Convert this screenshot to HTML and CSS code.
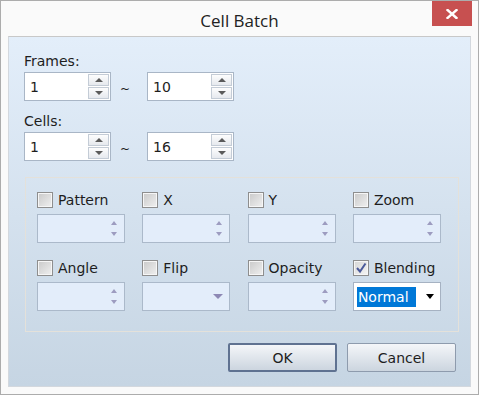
FILE: index.html
```html
<!DOCTYPE html>
<html lang="en">
<head>
  <meta charset="UTF-8">
  <title>Cell Batch</title>
  <link rel="stylesheet" href="styles.css">
</head>
<body>
  <div class="window">
    <div class="titlebar">
      <div class="title">Cell Batch</div>
      <button class="close" title="Close">
        <svg width="12" height="10" viewBox="0 0 12 10"><path d="M1.5 1 L10.5 9 M10.5 1 L1.5 9" stroke="#fff" stroke-width="2.4" stroke-linecap="square"/></svg>
      </button>
    </div>
    <div class="content">
      <div class="field-label">Frames:</div>
      <div class="range">
        <div class="spin"><span class="value">1</span><div class="spin-btns"><span class="sbtn"><i class="up"></i></span><span class="sbtn"><i class="down"></i></span></div></div>
        <span class="tilde">~</span>
        <div class="spin"><span class="value">10</span><div class="spin-btns"><span class="sbtn"><i class="up"></i></span><span class="sbtn"><i class="down"></i></span></div></div>
      </div>
      <div class="field-label second">Cells:</div>
      <div class="range">
        <div class="spin"><span class="value">1</span><div class="spin-btns"><span class="sbtn"><i class="up"></i></span><span class="sbtn"><i class="down"></i></span></div></div>
        <span class="tilde">~</span>
        <div class="spin"><span class="value">16</span><div class="spin-btns"><span class="sbtn"><i class="up"></i></span><span class="sbtn"><i class="down"></i></span></div></div>
      </div>

      <div class="group">
        <div class="cell">
          <label class="check"><span class="box"></span>Pattern</label>
          <div class="spin off"><div class="arrows"><i class="up"></i><i class="down"></i></div></div>
        </div>
        <div class="cell">
          <label class="check"><span class="box"></span>X</label>
          <div class="spin off"><div class="arrows"><i class="up"></i><i class="down"></i></div></div>
        </div>
        <div class="cell">
          <label class="check"><span class="box"></span>Y</label>
          <div class="spin off"><div class="arrows"><i class="up"></i><i class="down"></i></div></div>
        </div>
        <div class="cell">
          <label class="check"><span class="box"></span>Zoom</label>
          <div class="spin off"><div class="arrows"><i class="up"></i><i class="down"></i></div></div>
        </div>
        <div class="cell">
          <label class="check"><span class="box"></span>Angle</label>
          <div class="spin off"><div class="arrows"><i class="up"></i><i class="down"></i></div></div>
        </div>
        <div class="cell">
          <label class="check"><span class="box"></span>Flip</label>
          <div class="spin off combo"><i class="drop"></i></div>
        </div>
        <div class="cell">
          <label class="check"><span class="box"></span>Opacity</label>
          <div class="spin off"><div class="arrows"><i class="up"></i><i class="down"></i></div></div>
        </div>
        <div class="cell">
          <label class="check"><span class="box checked"><svg width="12" height="12" viewBox="0 0 12 12"><path d="M2 6 L5 9.5 L10.5 1.5" fill="none" stroke="#4b5a9a" stroke-width="2"/></svg></span>Blending</label>
          <div class="spin select"><span class="selected">Normal</span><i class="drop dark"></i></div>
        </div>
      </div>

      <div class="buttons">
        <button class="btn default">OK</button>
        <button class="btn">Cancel</button>
      </div>
    </div>
  </div>
</body>
</html>
```

FILE: styles.css
```css
body { margin: 0; font-family: "DejaVu Sans", Verdana, sans-serif; font-size: 14px; color: #1e1e1e; }
.window { width: 479px; height: 395px; box-sizing: border-box; border: 1px solid #acacac; background: #fafafa; display: flex; flex-direction: column; }

.titlebar { height: 35px; display: grid; grid-template-columns: 1fr auto 1fr; align-items: start; }
.title { grid-column: 2; font-family: "Open Sans", sans-serif; font-size: 17px; line-height: 24px; padding-top: 8px; color: #222; }
.close { grid-column: 3; justify-self: end; width: 40px; height: 25px; margin-right: 6px; padding: 0; border: none; background: #c75050; display: flex; align-items: center; justify-content: center; }

.content { flex: 1; margin: 0 7px 7px; border: 1px solid #d3d8de; border-top-color: #c8c8c8; background: linear-gradient(#e3eefa, #c6d5e3); padding: 16px 15px 0; }
.field-label { line-height: 16px; margin-bottom: 3px; }
.field-label.second { margin-top: 12px; }
.range { display: flex; align-items: center; }
.tilde { width: 36px; text-align: center; padding: 5px 8px 0 0; box-sizing: border-box; font-size: 12px; }

.spin { width: 87px; height: 29px; box-sizing: border-box; border: 1px solid #a9b6c6; background: #fff; display: flex; align-items: center; }
.value { padding-left: 5px; flex: 1; }
.spin-btns { display: flex; flex-direction: column; gap: 1px; align-self: stretch; padding: 1px 1px 1px 0; }
.sbtn { width: 19px; flex: 1; border: 1px solid #c4ccd6; background: linear-gradient(#fdfdfd, #e6e9ee); display: flex; align-items: center; justify-content: center; }
.up { width: 0; height: 0; border-left: 4px solid transparent; border-right: 4px solid transparent; border-bottom: 4px solid #5b5b5b; }
.down { width: 0; height: 0; border-left: 4px solid transparent; border-right: 4px solid transparent; border-top: 4px solid #5b5b5b; }

.group { width: 434px; box-sizing: border-box; margin: 16px 0 0 1px; border: 1px solid #e4e1da; padding: 14px 0 20px 11px; display: grid; grid-template-columns: repeat(4, 88px); column-gap: 17.3px; row-gap: 17px; }
.check { display: flex; align-items: center; gap: 5px; height: 16px; margin-bottom: 6px; }
.box { width: 16px; height: 16px; box-sizing: border-box; border: 1px solid #8e8e8e; background: linear-gradient(135deg, #c9c9c9, #f0f0f0); box-shadow: inset 0 0 0 1px #f6f6f6; display: flex; align-items: center; justify-content: center; }
.box.checked { background: linear-gradient(135deg, #d6d6d6, #f5f5f5); }

.spin.off { width: 88px; background: #e3edfa; border-color: #abb9ca; justify-content: flex-end; }
.arrows { display: flex; flex-direction: column; gap: 7px; margin-right: 7px; }
.arrows .up { border-bottom-color: #9d9cc0; border-left-width: 3.5px; border-right-width: 3.5px; }
.arrows .down { border-top-color: #9d9cc0; border-left-width: 3.5px; border-right-width: 3.5px; }
.drop { width: 0; height: 0; border-left: 5px solid transparent; border-right: 5px solid transparent; border-top: 5px solid #8d88b4; margin-right: 6px; }
.drop.dark { border-top-color: #000; border-left-width: 4px; border-right-width: 4px; margin-left: auto; margin-right: 6px; }

.spin.select { width: 88px; border-color: #a6b2c2; }
.selected { background: #0078d7; color: #fff; margin-left: 3px; padding: 0 3px 0 1px; width: 55px; line-height: 20px; }

.buttons { display: flex; justify-content: flex-end; gap: 10px; margin: 11px -1px 0 0; }
.btn { width: 109px; height: 29px; font-family: "DejaVu Sans", Verdana, sans-serif; font-size: 14px; color: #1e1e1e; border: 1px solid #8e9bad; border-radius: 2px; background: linear-gradient(#f4f6f9, #ccd5df); padding: 0; }
.btn.default { border: 2px solid #5f7291; }
```
